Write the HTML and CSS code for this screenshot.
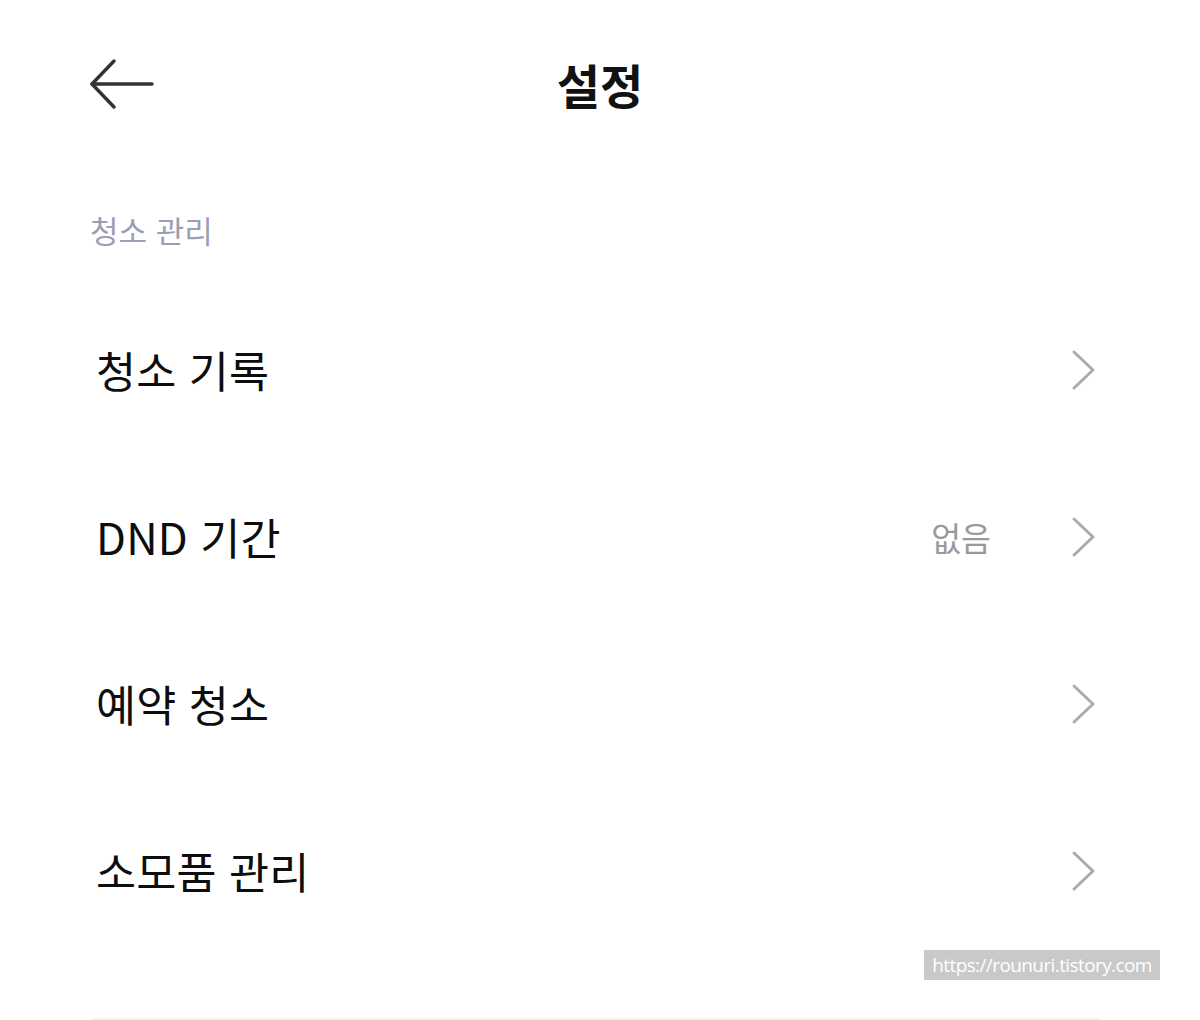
FILE: index.html
```html
<!DOCTYPE html>
<html lang="ko">
<head>
<meta charset="utf-8">
<title>설정</title>
<link rel="stylesheet" href="styles.css">
</head>
<body>
<div class="screen">
  <header class="topbar">
    <div class="back">
      <svg width="66" height="52" viewBox="0 0 66 52" fill="none" stroke="#333" stroke-width="3.4" stroke-linecap="round" stroke-linejoin="round">
        <path d="M63 25H3"/>
        <path d="M25 2L3 25L25 48"/>
      </svg>
    </div>
    <h1 class="title">설정</h1>
    <div></div>
  </header>

  <div class="section-label">청소 관리</div>

  <ul class="list">
    <li class="row">
      <span class="row-text">청소 기록</span>
      <span class="row-right"><svg class="chev" width="26" height="42" viewBox="0 0 26 42" fill="none" stroke="#ababab" stroke-width="3" stroke-linecap="round" stroke-linejoin="round"><path d="M3 3L22 21L3 39"/></svg></span>
    </li>
    <li class="row">
      <span class="row-text">DND 기간</span>
      <span class="row-right"><span class="value">없음</span><svg class="chev" width="26" height="42" viewBox="0 0 26 42" fill="none" stroke="#ababab" stroke-width="3" stroke-linecap="round" stroke-linejoin="round"><path d="M3 3L22 21L3 39"/></svg></span>
    </li>
    <li class="row">
      <span class="row-text">예약 청소</span>
      <span class="row-right"><svg class="chev" width="26" height="42" viewBox="0 0 26 42" fill="none" stroke="#ababab" stroke-width="3" stroke-linecap="round" stroke-linejoin="round"><path d="M3 3L22 21L3 39"/></svg></span>
    </li>
    <li class="row">
      <span class="row-text">소모품 관리</span>
      <span class="row-right"><svg class="chev" width="26" height="42" viewBox="0 0 26 42" fill="none" stroke="#ababab" stroke-width="3" stroke-linecap="round" stroke-linejoin="round"><path d="M3 3L22 21L3 39"/></svg></span>
    </li>
  </ul>

  <div class="divider"></div>

  <div class="watermark">https://rounuri.tistory.com</div>
</div>
</body>
</html>
```

FILE: styles.css
```css
html, body {
  margin: 0;
  padding: 0;
  background: #ffffff;
}

body {
  font-family: "Noto Sans CJK KR", "Noto Sans", sans-serif;
  color: #111111;
}

.screen {
  position: relative;
  width: 1200px;
  height: 1020px;
  overflow: hidden;
}

.topbar {
  height: 168px;
  display: grid;
  grid-template-columns: 1fr auto 1fr;
  align-items: center;
}

.back {
  padding-left: 89px;
  display: flex;
  align-items: center;
  padding-top: 2px;
}

.title {
  margin: 0;
  font-size: 47px;
  font-weight: 700;
  line-height: 60px;
  color: #111111;
}

.section-label {
  padding: 42px 0 36px 90px;
  font-size: 31px;
  line-height: 40px;
  color: #9d9db3;
}

.list {
  list-style: none;
  margin: 0;
  padding: 0;
}

.row {
  height: 167px;
  display: flex;
  align-items: center;
  justify-content: space-between;
  padding: 0 103px 0 96px;
}

.row-text {
  font-size: 43.5px;
  line-height: 56px;
  color: #0d0d0d;
  letter-spacing: 0.2px;
}

.row-right {
  display: flex;
  align-items: center;
  gap: 80px;
}

.value {
  font-size: 32.5px;
  line-height: 44px;
  color: #9a9a9a;
}

.chev {
  display: block;
}

.divider {
  margin: 64px 100px 0 93px;
  height: 2px;
  background: #f3f3f3;
}

.watermark {
  position: absolute;
  left: 924px;
  top: 950px;
  width: 236px;
  height: 30px;
  background: #c9c9c9;
  color: #ffffff;
  font-family: "Open Sans", "DejaVu Sans", sans-serif;
  font-size: 19px;
  line-height: 30px;
  letter-spacing: -0.6px;
  text-align: center;
  white-space: nowrap;
}
```
